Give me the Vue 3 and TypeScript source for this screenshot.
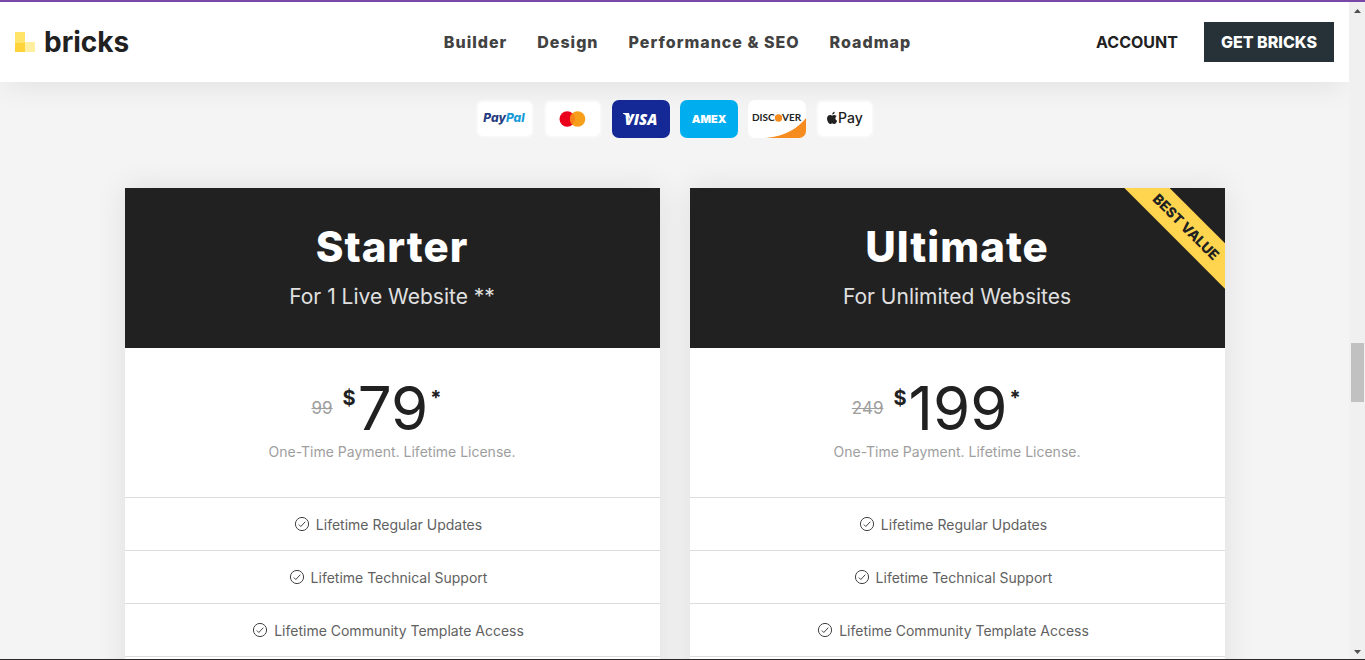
<script setup lang="ts">
interface Plan {
  name: string
  audience: string
  oldPrice: string
  price: string
  badge?: string
}

const links: string[] = ['Builder', 'Design', 'Performance & SEO', 'Roadmap']

const plans: Plan[] = [
  { name: 'Starter', audience: 'For 1 Live Website **', oldPrice: '99', price: '79' },
  { name: 'Ultimate', audience: 'For Unlimited Websites', oldPrice: '249', price: '199', badge: 'BEST VALUE' },
]

const features: string[] = [
  'Lifetime Regular Updates',
  'Lifetime Technical Support',
  'Lifetime Community Template Access',
]
</script>

<template>
  <div class="window">
    <div class="viewport">
      <div class="page">
        <header class="header">
          <a class="brand" href="#" aria-label="bricks">
            <svg class="brand-mark" width="20" height="20" viewBox="0 0 20 20" aria-hidden="true">
              <rect width="10" height="11" fill="#ffe469" />
              <rect y="11" width="10" height="9" fill="#ffd43b" />
              <rect x="10" y="10" width="10" height="10" fill="#ffef9f" />
            </svg>
            <span class="brand-name">bricks</span>
          </a>
          <nav class="nav">
            <a v-for="link in links" :key="link" href="#">{{ link }}</a>
          </nav>
          <div class="actions">
            <a class="account" href="#">ACCOUNT</a>
            <a class="cta" href="#">GET BRICKS</a>
          </div>
        </header>

        <main class="main">
          <ul class="payments">
            <li>
              <svg viewBox="0 0 58 38" role="img" aria-label="PayPal">
                <rect x="1" y="1" width="56" height="36" rx="6" fill="#fff" stroke="#f8f8f8" stroke-width="2" />
                <text class="paypal" x="28" y="22"><tspan fill="#253b80">Pay</tspan><tspan fill="#179bd7">Pal</tspan></text>
              </svg>
            </li>
            <li>
              <svg viewBox="0 0 58 38" role="img" aria-label="Mastercard">
                <rect x="1" y="1" width="56" height="36" rx="6" fill="#fff" stroke="#f8f8f8" stroke-width="2" />
                <circle cx="23.200" cy="19" r="7.700" fill="#eb001b" />
                <circle cx="33.600" cy="19" r="7.700" fill="#f79e1b" />
                <path d="M28.400 13.300a7.700 7.700 0 0 1 0 11.400a7.700 7.700 0 0 1 0-11.400z" fill="#f9801b" />
              </svg>
            </li>
            <li>
              <svg viewBox="0 0 58 38" role="img" aria-label="Visa">
                <rect width="58" height="38" rx="7" fill="#142995" />
                <path d="M11 13h6l2 8c-2-4-4-6-8-7.300z" fill="#fff" />
                <text class="visa" x="29" y="25">VISA</text>
              </svg>
            </li>
            <li>
              <svg viewBox="0 0 58 38" role="img" aria-label="American Express">
                <rect width="58" height="38" rx="7" fill="#00aeef" />
                <text class="amex" x="29" y="23">AMEX</text>
              </svg>
            </li>
            <li>
              <svg viewBox="0 0 58 38" role="img" aria-label="Discover">
                <rect width="58" height="38" rx="7" fill="#fff" />
                <path d="M18 38C38 36 50 28 58 18v13a7 7 0 0 1-7 7z" fill="#f68b1f" />
                <text class="discover" x="4" y="21">DISC</text>
                <circle cx="30.500" cy="18" r="3.700" fill="#f68b1f" />
                <text class="discover" x="34" y="21">VER</text>
              </svg>
            </li>
            <li>
              <svg viewBox="0 0 58 38" role="img" aria-label="Apple Pay">
                <rect x="1" y="1" width="56" height="36" rx="6" fill="#fff" stroke="#f8f8f8" stroke-width="2" />
                <path d="M18.500 14.900c.9.100 1.700.5 2.200 1.200-1.900 1.200-1.600 3.900.4 4.700-.5 1.500-1.500 3.200-2.700 3.200-.8 0-1.100-.5-2.100-.5s-1.300.5-2.100.5c-1.700-.1-3.200-3.300-3.200-5.400 0-2.300 1.400-3.700 3-3.700 1 0 1.600.5 2.300.5.600 0 1.200-.5 2.200-.5z" fill="#222" />
                <path d="M18.700 11.800c.1 1.500-1 2.800-2.500 2.800-.1-1.400 1.100-2.700 2.500-2.800z" fill="#222" />
                <text class="apple" x="22" y="23">Pay</text>
              </svg>
            </li>
          </ul>

          <div class="plans">
            <article v-for="plan in plans" :key="plan.name" class="plan">
              <div class="plan-head">
                <h2>{{ plan.name }}</h2>
                <p>{{ plan.audience }}</p>
                <span v-if="plan.badge" class="ribbon">{{ plan.badge }}</span>
              </div>
              <div class="plan-price">
                <div class="price-row">
                  <s class="old">{{ plan.oldPrice }}</s>
                  <div class="current">
                    <span class="mark">$</span>
                    <span class="amount">{{ plan.price }}</span>
                    <span class="mark">*</span>
                  </div>
                </div>
                <p class="terms">One-Time Payment. Lifetime License.</p>
              </div>
              <ul class="features">
                <li v-for="feature in features" :key="feature">
                  <svg width="16" height="16" viewBox="0 0 16 16" aria-hidden="true">
                    <circle cx="8" cy="8" r="6.600" />
                    <path d="M4.800 8.500l2 2 4.500-4.800" />
                  </svg>
                  <span>{{ feature }}</span>
                </li>
                <li></li>
              </ul>
            </article>
          </div>
        </main>
      </div>

      <div class="scrollbar" aria-hidden="true">
        <svg width="7" height="4" viewBox="0 0 7 4"><path d="M0 4L3.500 0L7 4z" /></svg>
        <div class="track"><div class="thumb"></div></div>
        <svg width="7" height="4" viewBox="0 0 7 4"><path d="M0 0h7L3.500 4z" /></svg>
      </div>
    </div>
  </div>
</template>

<style>
body {
  margin: 0;
  background: #f4f4f4;
}
</style>

<style scoped>
.window {
  box-sizing: border-box;
  display: flex;
  flex-direction: column;
  height: 100vh;
  overflow: hidden;
  border-top: 2px solid #7847a8;
  border-bottom: 1px solid #2b2829;
  font-family: Inter, "Liberation Sans", sans-serif;
  color: #212121;
}

.viewport {
  display: flex;
  flex: 1;
  min-height: 0;
}

.page {
  flex: 1;
  min-width: 0;
  overflow: hidden;
  background: #f4f4f4;
}

a {
  color: inherit;
  text-decoration: none;
}

ul {
  margin: 0;
  padding: 0;
  list-style: none;
}

h2,
p {
  margin: 0;
}

.header {
  display: grid;
  grid-template-columns: 1fr auto 1fr;
  align-items: center;
  height: 80px;
  padding: 0 15px;
  background: #fff;
  box-shadow: 0 10px 30px -6px rgba(0, 0, 0, 0.08);
}

.brand {
  display: flex;
  align-items: center;
  gap: 9px;
}

.brand-name {
  font-size: 28px;
  font-weight: 700;
  line-height: 40px;
}

.nav {
  display: flex;
  gap: 30px;
  padding-left: 6px;
  font-size: 16px;
  font-weight: 800;
  letter-spacing: 1px;
  color: #424242;
}

.actions {
  display: flex;
  align-items: center;
  justify-content: flex-end;
  gap: 26px;
  font-size: 16px;
}

.account {
  font-weight: 700;
}

.cta {
  padding: 0 17px;
  background: #263238;
  color: #fff;
  font-weight: 800;
  line-height: 40px;
}

.main {
  padding: 18px 30px 0;
}

.payments {
  display: flex;
  justify-content: center;
  gap: 10px;
}

.payments svg {
  display: block;
  width: 58px;
  height: 38px;
}

.paypal {
  font: italic 800 12px Inter, sans-serif;
  text-anchor: middle;
}

.visa {
  font: italic 800 15px "Open Sans", sans-serif;
  fill: #fff;
  text-anchor: middle;
}

.amex {
  font: 900 11px Inter, sans-serif;
  fill: #fff;
  text-anchor: middle;
}

.discover {
  font: 700 10px Lato, sans-serif;
  fill: #222;
}

.apple {
  font: 500 14px Inter, sans-serif;
  fill: #222;
}

.plans {
  display: grid;
  grid-template-columns: 1fr 1fr;
  gap: 30px;
  max-width: 1100px;
  margin: 50px auto 0;
}

.plan {
  background: #fff;
  box-shadow: 0 0 30px rgba(0, 0, 0, 0.09);
  text-align: center;
}

.plan-head {
  position: relative;
  box-sizing: border-box;
  height: 160px;
  padding-top: 32px;
  overflow: hidden;
  background: #212121;
  color: #fff;
}

.plan-head h2 {
  font-size: 42px;
  font-weight: 800;
  line-height: 54px;
  letter-spacing: 1px;
}

.plan-head p {
  margin-top: 8px;
  color: #e0e0e0;
  font-size: 21px;
  line-height: 30px;
}

.ribbon {
  position: absolute;
  top: 23px;
  right: -41px;
  width: 160px;
  background: #ffd54f;
  color: #212121;
  font-size: 14px;
  font-weight: 800;
  line-height: 32px;
  transform: rotate(45deg);
}

.plan-price {
  box-sizing: border-box;
  height: 149px;
  padding-top: 30px;
}

.price-row {
  display: grid;
  grid-template-columns: 1fr auto 1fr;
  align-items: center;
  gap: 10px;
}

.old {
  justify-self: end;
  color: #9e9e9e;
  font-size: 17px;
}

.current {
  display: flex;
  gap: 2px;
}

.amount {
  font-size: 60px;
  font-weight: 400;
  line-height: 60px;
}

.mark {
  font-size: 20px;
  font-weight: 700;
  line-height: 40px;
}

.terms {
  margin-top: 4px;
  color: #9e9e9e;
  font-size: 14px;
  line-height: 20px;
}

.features li {
  display: flex;
  align-items: center;
  justify-content: center;
  gap: 6px;
  height: 52px;
  padding-right: 8px;
  border-top: 1px solid #dcdcdc;
  color: #616161;
  font-size: 14px;
}

.features svg {
  fill: none;
  stroke: #424242;
}

.scrollbar {
  display: flex;
  flex-direction: column;
  align-items: center;
  justify-content: space-between;
  width: 16px;
  padding: 7px 0 5px;
  box-sizing: border-box;
  background: #f0f0f0;
}

.scrollbar svg {
  fill: #505050;
}

.track {
  display: flex;
  flex-direction: column;
  flex: 1;
}

.track::before {
  flex: 327;
  content: "";
}

.track::after {
  flex: 246;
  content: "";
}

.thumb {
  flex: 59;
  width: 13px;
  background: #c1c1c1;
}
</style>
